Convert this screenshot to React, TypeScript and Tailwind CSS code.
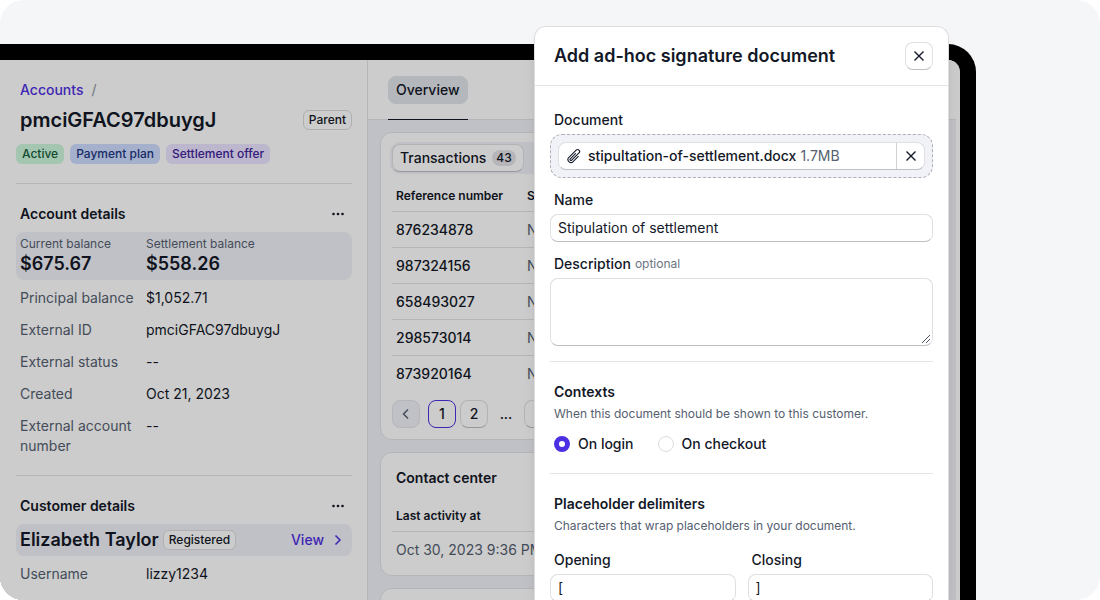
import type { ReactNode } from "react";
import clsx from "clsx";

const control =
  "rounded-lg border border-[#e0e0e3] border-b-[#bfbfc3] bg-white text-[#131827]";

const textField = clsx(control, "mt-1 block h-7 w-full px-[7px] pb-0.5");

const cellLine = "border-b border-[#e4e4e7]";

function CloseIcon() {
  return (
    <svg width="12" height="12" viewBox="0 0 12 12" fill="none" stroke="currentColor" strokeWidth="1.4" aria-hidden="true">
      <path d="M1.5 1.5 10.5 10.5M10.5 1.5 1.5 10.5" />
    </svg>
  );
}

function PaperclipIcon() {
  return (
    <svg width="16" height="16" viewBox="0 0 24 24" fill="none" stroke="currentColor" strokeWidth="1.6" strokeLinecap="round" strokeLinejoin="round" aria-hidden="true">
      <path d="m18.375 12.739-7.693 7.693a4.5 4.5 0 0 1-6.364-6.364l10.94-10.94A3 3 0 1 1 19.5 7.372L8.552 18.32m.009-.01-.01.01m5.699-9.941-7.81 7.81a1.5 1.5 0 0 0 2.112 2.13" />
    </svg>
  );
}

function ChevronIcon({ left = false }: { left?: boolean }) {
  return (
    <svg width="12" height="12" viewBox="0 0 12 12" fill="none" stroke="currentColor" strokeWidth="1.5" aria-hidden="true">
      <path d={left ? "M8 1.5 3.5 6 8 10.5" : "M3.5 1.5 8 6 3.5 10.5"} />
    </svg>
  );
}

function Tag({ className, children }: { className: string; children: ReactNode }) {
  return (
    <span className={clsx("flex h-5 items-center rounded-md text-xs font-medium whitespace-nowrap", className)}>
      {children}
    </span>
  );
}

function SectionTitle({ title }: { title: string }) {
  return (
    <div className="flex items-center justify-between pr-2 pl-1">
      <h2 className="text-sm font-semibold">{title}</h2>
      <button type="button" aria-label={`${title} menu`} className="flex h-5 items-center">
        <svg width="12" height="4" viewBox="0 0 12 4" fill="currentColor" aria-hidden="true">
          <circle cx="1.5" cy="2" r="1.3" />
          <circle cx="6" cy="2" r="1.3" />
          <circle cx="10.5" cy="2" r="1.3" />
        </svg>
      </button>
    </div>
  );
}

function Detail({ label, value }: { label: string; value: string }) {
  return (
    <div className="flex px-1 py-1.5 text-sm">
      <dt className="w-[126px] shrink-0 pr-3 text-[#556070]">{label}</dt>
      <dd>{value}</dd>
    </div>
  );
}

const accountDetails = [
  { label: "Principal balance", value: "$1,052.71" },
  { label: "External ID", value: "pmciGFAC97dbuygJ" },
  { label: "External status", value: "--" },
  { label: "Created", value: "Oct 21, 2023" },
  { label: "External account number", value: "--" },
];

function Sidebar() {
  return (
    <aside className="w-[368px] shrink-0 border-r border-[#e4e4e7] bg-white pt-5 pr-[15px] pl-4">
      <nav className="flex gap-2 px-1 text-sm">
        <a href="#accounts" className="font-medium text-[#4f2fe0]">Accounts</a>
        <span className="text-[#8b93a0]">/</span>
      </nav>
      <div className="mt-1.5 flex items-center justify-between pl-1">
        <h1 className="text-xl leading-7 font-semibold">pmciGFAC97dbuygJ</h1>
        <Tag className="border border-[#dcdcdf] px-[5px]">Parent</Tag>
      </div>
      <div className="mt-2.5 flex gap-1.5">
        <Tag className="bg-[#cdf7dd] px-1.5 text-[#15603a]">Active</Tag>
        <Tag className="bg-[#cfdcff] px-1.5 text-[#1c3782]">Payment plan</Tag>
        <Tag className="bg-[#ebe5ff] px-1.5 text-[#41229c]">Settlement offer</Tag>
      </div>

      <section className="mt-[19px] border-t border-[#e4e4e7] pt-5">
        <SectionTitle title="Account details" />
        <dl className="mt-2">
          <div className="mb-0.5 flex h-12 items-center rounded-lg bg-[#f1f2f8] px-1">
            <div className="w-[126px]">
              <dt className="text-xs text-[#556070]">Current balance</dt>
              <dd className="text-lg leading-6 font-semibold">$675.67</dd>
            </div>
            <div>
              <dt className="text-xs text-[#556070]">Settlement balance</dt>
              <dd className="text-lg leading-6 font-semibold">$558.26</dd>
            </div>
          </div>
          {accountDetails.map((item) => (
            <Detail key={item.label} {...item} />
          ))}
        </dl>
      </section>

      <section className="mt-[13px] border-t border-[#e4e4e7] pt-5">
        <SectionTitle title="Customer details" />
        <div className="mt-2 mb-0.5 flex h-8 items-center rounded-lg bg-[#f1f2f8] pr-2 pl-1">
          <h3 className="text-lg leading-6 font-semibold">Elizabeth Taylor</h3>
          <Tag className="ml-1 border border-[#dcdcdf] bg-white px-[5px]">Registered</Tag>
          <a href="#customer" className="ml-auto flex items-center gap-2 text-sm font-medium text-[#4f2fe0]">
            View
            <ChevronIcon />
          </a>
        </div>
        <dl>
          <Detail label="Username" value="lizzy1234" />
        </dl>
      </section>
    </aside>
  );
}

const references = ["876234878", "987324156", "658493027", "298573014", "873920164"];

function TransactionsCard() {
  return (
    <section className="rounded-xl border border-[#e4e4e7] bg-white px-[11px] pt-[9px] pb-[11px]">
      <div className="-mx-0.5 flex rounded-[10px] bg-[#f1f2f8] p-0.5">
        <button type="button" className={clsx(control, "flex h-7 items-center gap-1.5 px-[7px] text-sm font-medium")}>
          Transactions
          <span className="rounded-full bg-[#e4e4e9] px-1 text-xs">43</span>
        </button>
      </div>
      <table className="mt-1.5 w-full border-separate border-spacing-0 text-left text-sm">
        <thead>
          <tr className="h-8 text-xs">
            <th className={clsx(cellLine, "w-[131px] px-1 font-semibold")}>Reference number</th>
            <th className={clsx(cellLine, "px-1 font-semibold")}>Status</th>
          </tr>
        </thead>
        <tbody>
          {references.map((reference, index) => (
            <tr key={reference} className="h-9">
              <td className={clsx(index < 4 && cellLine, "px-1 font-medium")}>{reference}</td>
              <td className={clsx(index < 4 && cellLine, "px-1 text-[#556070]")}>New</td>
            </tr>
          ))}
        </tbody>
      </table>
      <nav aria-label="Pages" className="mt-2 flex gap-1 text-sm font-medium">
        <button type="button" aria-label="Previous" className="mr-1 flex size-7 items-center justify-center rounded-lg border border-[#e4e4e9] bg-[#f1f2f8] text-[#556070]">
          <ChevronIcon left />
        </button>
        <button type="button" className="size-7 rounded-lg border border-[#4f2fe0]">1</button>
        <button type="button" className={clsx(control, "size-7")}>2</button>
        <span className="w-7 pt-1 text-center">...</span>
        <button type="button" className={clsx(control, "size-7")}>8</button>
      </nav>
    </section>
  );
}

function Main() {
  return (
    <main className="flex min-w-0 grow flex-col">
      <div className="h-[60px] shrink-0 border-b border-[#e4e4e7] bg-white px-5 pt-4">
        <div className="flex">
          <div className="h-11 border-b border-[#131827]">
            <button type="button" className="h-7 rounded-lg bg-[#e1e5ec] px-2 text-sm font-medium">Overview</button>
          </div>
        </div>
      </div>
      <div className="flex grow flex-col gap-3 bg-[#f1f2f8] p-3">
        <TransactionsCard />
        <section className="rounded-xl border border-[#e4e4e7] bg-white px-[11px] pt-[15px] pb-[7px]">
          <h2 className="px-1 text-sm font-semibold">Contact center</h2>
          <table className="mt-3 w-full border-separate border-spacing-0 text-left text-sm">
            <thead>
              <tr className="h-8 text-xs">
                <th className={clsx(cellLine, "px-1 font-semibold")}>Last activity at</th>
              </tr>
            </thead>
            <tbody>
              <tr className="h-9">
                <td className="px-1 text-[#556070]">Oct 30, 2023 9:36 PM</td>
              </tr>
            </tbody>
          </table>
        </section>
        <section className="min-h-24 rounded-xl border border-[#e4e4e7] bg-white" />
      </div>
    </main>
  );
}

function SignatureDialog() {
  return (
    <div
      role="dialog"
      aria-labelledby="dialog-title"
      className="h-full w-[415px] rounded-t-xl border border-b-0 border-[#dddde0] bg-white shadow-lg"
    >
      <header className="flex items-center justify-between border-b border-[#e4e4e7] py-[15px] pr-[15px] pl-[19px]">
        <h2 id="dialog-title" className="text-lg leading-7 font-semibold">Add ad-hoc signature document</h2>
        <button type="button" aria-label="Close" className={clsx(control, "flex size-7 items-center justify-center")}>
          <CloseIcon />
        </button>
      </header>
      <form className="px-[15px] pt-6 text-sm">
        <h3 className="px-1 font-medium">Document</h3>
        <div className="mt-1 rounded-xl border border-dashed border-[#adaeb5] bg-[#f1f2f8] p-[7px]">
          <div className={clsx(control, "flex h-7 items-stretch")}>
            <span className="flex grow items-center pl-[7px]">
              <PaperclipIcon />
              <span className="ml-1.5 font-medium">stipultation-of-settlement.docx</span>
              <span className="ml-1 text-[#556070]">1.7MB</span>
            </span>
            <button type="button" aria-label="Remove file" className="flex w-7 items-center justify-center border-l border-[#d2d2d6]">
              <CloseIcon />
            </button>
          </div>
        </div>

        <label htmlFor="name" className="mt-3 block px-1 font-medium">Name</label>
        <input id="name" defaultValue="Stipulation of settlement" className={textField} />

        <div className="mt-3 flex items-center gap-1 px-1">
          <label htmlFor="description" className="font-medium">Description</label>
          <span className="text-xs text-[#6b7483]">optional</span>
        </div>
        <div className="relative mt-1">
          <textarea id="description" className={clsx(control, "block h-[68px] w-full resize-none px-[7px]")} />
          <svg width="8" height="8" viewBox="0 0 8 8" fill="none" stroke="#4b5563" className="pointer-events-none absolute right-[3px] bottom-[3px]" aria-hidden="true">
            <path d="M0 8 8 0M4 8 8 4" />
          </svg>
        </div>

        <fieldset className="mt-[15px] border-t border-[#e4e4e7] pt-5">
          <h3 className="px-1 font-semibold">Contexts</h3>
          <p className="mt-1 px-1 text-xs text-[#556070]">When this document should be shown to this customer.</p>
          <div className="mt-3 flex gap-6 px-1 font-medium">
            <label className="flex items-center gap-2">
              <input type="radio" name="context" defaultChecked className="size-4 appearance-none rounded-full border border-[#dcdcdf] checked:border-5 checked:border-[#4a2fe3]" />
              On login
            </label>
            <label className="flex items-center gap-2">
              <input type="radio" name="context" className="size-4 appearance-none rounded-full border border-[#dcdcdf] checked:border-5 checked:border-[#4a2fe3]" />
              On checkout
            </label>
          </div>
        </fieldset>

        <fieldset className="mt-[19px] border-t border-[#e4e4e7] pt-5">
          <h3 className="px-1 font-semibold">Placeholder delimiters</h3>
          <p className="mt-1 px-1 text-xs text-[#556070]">Characters that wrap placeholders in your document.</p>
          <div className="mt-4 grid grid-cols-2 gap-3">
            <div>
              <label htmlFor="opening" className="block px-1 font-medium">Opening</label>
              <input id="opening" defaultValue="[" className={textField} />
            </div>
            <div>
              <label htmlFor="closing" className="block px-1 font-medium">Closing</label>
              <input id="closing" defaultValue="]" className={textField} />
            </div>
          </div>
        </fieldset>
      </form>
    </div>
  );
}

export default function App() {
  return (
    <div className="h-screen overflow-hidden bg-white font-['Inter',sans-serif] text-[#131827]">
      <div className="relative h-full overflow-hidden rounded-3xl bg-[#f5f6f8] pt-11 pr-[124px]">
        {/* Device frame */}
        <div className="h-full overflow-hidden rounded-tr-[28px] bg-black pt-4 pr-4">
          <div className="relative flex h-full overflow-hidden rounded-tr-xl bg-white pr-1">
            <Sidebar />
            <Main />
            <div className="absolute inset-0 bg-black/20" />
          </div>
        </div>
        {/* Dialog over the page */}
        <div className="absolute inset-0 flex justify-end pt-[26px] pr-[151px]">
          <SignatureDialog />
        </div>
      </div>
    </div>
  );
}
